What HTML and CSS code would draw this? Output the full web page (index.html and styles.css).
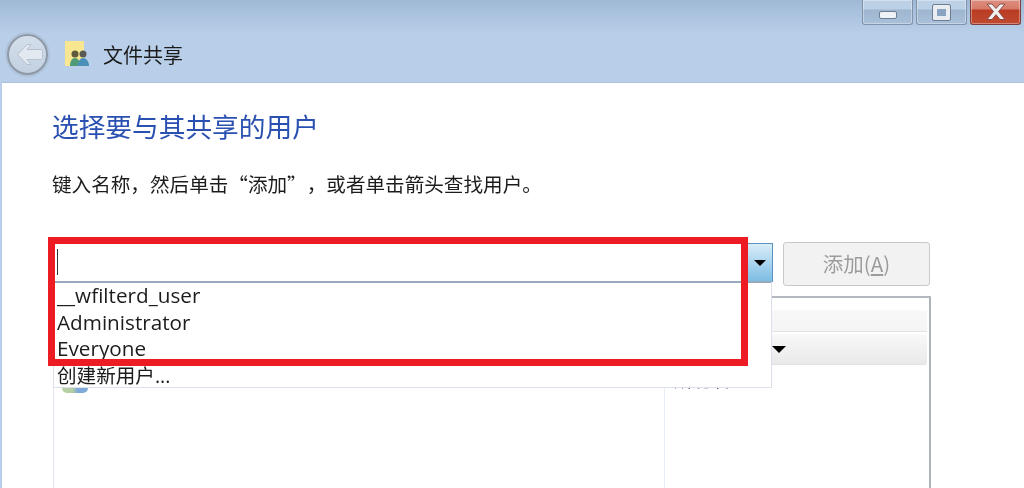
FILE: index.html
```html
<!DOCTYPE html>
<html lang="zh-CN">
<head>
    <meta charset="UTF-8">
    <title>文件共享</title>
    <link rel="stylesheet" href="styles.css">
</head>
<body>
    <div class="window">
        <div class="caption">
            <div class="caption-btn">
                <span class="min-glyph"></span>
            </div>
            <div class="caption-btn">
                <span class="max-glyph"></span>
            </div>
            <div class="caption-btn close-btn">
                <svg width="26" height="20" viewBox="0 0 26 20">
                    <path d="M4 2h5l4 4.500l4-4.500h5l-6.500 7.500l6.500 8h-5l-4-4.800l-4 4.800h-5l6.500-8z" fill="#f1eeee" stroke="#8a4a48" stroke-width="1"/>
                </svg>
            </div>
        </div>

        <div class="nav">
            <div class="back-btn">
                <svg width="30" height="30" viewBox="0 0 30 30">
                    <path d="M4.500 15.500l9.500-10h4l-4 5h14c1 0 1.500 .5 1.500 1.500v7c0 1-.5 1.500-1.500 1.500h-14l4 5h-4z" fill="#e3e9f1" stroke="#b7c1cf" stroke-width="1"/>
                </svg>
            </div>
            <svg class="share-icon" width="27" height="26" viewBox="0 0 27 26">
                <rect x="1" y="0" width="19" height="25" fill="#f8e690"/>
                <circle cx="11" cy="13" r="3.500" fill="#5e5a3a"/>
                <path d="M6 25c0-5 2-8 5-8s5 3 5 8z" fill="#4f9a78"/>
                <circle cx="19" cy="13" r="3.500" fill="#5a5a54"/>
                <path d="M14 25c0-5 2-8 5-8s6 3 6 8z" fill="#4a8fb8"/>
            </svg>
            <span class="nav-title">文件共享</span>
        </div>

        <div class="content">
            <h1 class="heading">选择要与其共享的用户</h1>
            <p class="hint">键入名称，然后单击“添加”，或者单击箭头查找用户。</p>

            <div class="input-row">
                <div class="combo">
                    <div class="combo-field"><span class="caret"></span></div>
                    <div class="combo-arrow"><span class="arrow-down"></span></div>
                </div>
                <div class="add-btn">添加(<u>A</u>)</div>
            </div>

            <div class="user-list">
                <div class="list-top"></div>
                <div class="list-head"><span class="head-arrow"></span></div>
                <div class="list-body">
                    <div class="col-name"></div>
                    <div class="col-level">所有者</div>
                </div>
            </div>
        </div>

        <div class="dropdown">
            <div class="drop-item">__wfilterd_user</div>
            <div class="drop-item">Administrator</div>
            <div class="drop-item">Everyone</div>
            <div class="drop-item drop-new">创建新用户...</div>
        </div>
        <div class="user-icon-peek"></div>
        <div class="highlight"></div>
    </div>
</body>
</html>
```

FILE: styles.css
```css
* {
    box-sizing: border-box;
}

html, body {
    margin: 0;
    height: 100%;
    overflow: hidden;
}

body {
    font-family: "Noto Sans CJK SC", sans-serif;
    background: #fff;
}

.window {
    position: relative;
    width: 1024px;
    height: 488px;
    overflow: hidden;
    background: linear-gradient(#9fb9d5 0, #b9cfe9 34px, #b9cfe9 100%);
    filter: blur(0.4px);
}

.caption {
    display: flex;
    justify-content: flex-end;
    gap: 3px;
    height: 25px;
    padding-right: 3px;
}

.caption-btn {
    width: 51px;
    height: 25px;
    display: flex;
    align-items: center;
    justify-content: center;
    border: 1px solid #7f93aa;
    border-top: 0;
    border-radius: 0 0 3px 3px;
    background: linear-gradient(#bcd0e6 0, #bcd0e6 9px, #9db6d0 10px, #a9c0da 100%);
    box-shadow: inset 0 0 0 1px rgba(255, 255, 255, 0.35);
}

.close-btn {
    border-color: #7d3c3c;
    background: linear-gradient(#dd8f80 0, #d67a6a 9px, #b93c22 10px, #c04a30 100%);
}

.min-glyph {
    width: 18px;
    height: 8px;
    margin-top: 5px;
    background: #eef1f5;
    border: 1px solid #6f7d90;
    border-radius: 2px;
}

.max-glyph {
    width: 17px;
    height: 15px;
    border: 4px solid #e9edf2;
    outline: 1px solid #6f7d90;
    background: #8aa3c2;
    border-radius: 1px;
}

.nav {
    display: flex;
    align-items: center;
    height: 58px;
    padding-left: 7px;
}

.back-btn {
    width: 41px;
    height: 41px;
    display: flex;
    align-items: center;
    justify-content: center;
    border-radius: 50%;
    border: 2px solid #8e98a6;
    background: linear-gradient(#d4dfeb, #c2d0e0);
    box-shadow: 0 0 0 2px #aec3da;
}

.share-icon {
    margin-left: 16px;
}

.nav-title {
    margin-left: 12px;
    font-size: 20px;
    color: #1c1c1c;
}

.content {
    height: 405px;
    margin-left: 2px;
    padding: 27px 0 0 50px;
    background: #fff;
    box-shadow: 0 -1px 0 #a9c1dc;
}

.heading {
    margin: 0;
    font-size: 26.700px;
    line-height: 32px;
    font-weight: 400;
    color: #2a50b2;
}

.hint {
    margin: 28px 0 0;
    font-size: 19.600px;
    line-height: 28px;
    color: #1c1c1c;
    text-spacing-trim: space-all;
}

.input-row {
    display: flex;
    margin: 45px 0 0 1px;
    height: 53px;
}

.combo {
    display: flex;
    width: 720px;
    height: 39px;
    margin-right: 10px;
    border: 1px solid #5b93c0;
}

.combo-field {
    flex: 1;
    padding: 5px 0 0 3px;
    background: #fff;
}

.caret {
    display: block;
    width: 1px;
    height: 26px;
    background: #333;
}

.combo-arrow {
    width: 25px;
    display: flex;
    align-items: center;
    justify-content: center;
    background: linear-gradient(#d9edf8, #7dbde4);
    border-left: 1px solid #5b93c0;
}

.arrow-down, .head-arrow {
    width: 0;
    height: 0;
    border-left: 6px solid transparent;
    border-right: 6px solid transparent;
    border-top: 6px solid #000;
}

.add-btn {
    width: 147px;
    height: 44px;
    margin-top: -1px;
    padding-bottom: 2px;
    display: flex;
    align-items: center;
    justify-content: center;
    background: #f2f2f2;
    border: 1px solid #c9c9c9;
    border-radius: 3px;
    font-size: 20.500px;
    color: #9c9c9c;
}

.user-list {
    width: 878px;
    height: 200px;
    margin-left: 1px;
    padding-right: 2px;
    border: 1px solid #dfe5ee;
    border-top: 2px solid #b4b8c0;
    border-right: 2px solid #aeb2ba;
}

.list-top {
    height: 34px;
    background: linear-gradient(#fff 0, #fff 12px, #f7f7f7 13px, #f5f5f5 100%);
    border-bottom: 1px solid #e2e2e2;
}

.list-head {
    display: flex;
    align-items: center;
    height: 31px;
    margin-top: 2px;
    padding-left: 718px;
    background: linear-gradient(#f8f8f8, #e9e9e9);
    border-bottom: 1px solid #e2e2e2;
    border-radius: 3px;
}

.head-arrow {
    border-left-width: 7px;
    border-right-width: 7px;
    border-top-width: 7px;
}

.list-body {
    display: flex;
    height: 130px;
}

.col-name {
    width: 611px;
    border-right: 1px solid #e8eef6;
}

.col-level {
    padding: 2px 0 0 9px;
    font-size: 19px;
    line-height: 24px;
    color: #333;
}

/* popup and the annotation box sit over the page */
.dropdown {
    position: absolute;
    left: 53px;
    top: 281px;
    width: 719px;
    height: 107px;
    padding: 0 0 0 3px;
    background: #fff;
    border: 1px solid #dde2ea;
    border-top: 2px solid #96a9bd;
    font-family: "Open Sans", "Noto Sans CJK SC", sans-serif;
    font-size: 20.700px;
    color: #1c1c1c;
}

.drop-item {
    height: 26.500px;
    line-height: 25px;
    white-space: nowrap;
}

.drop-new {
    font-size: 19.600px;
    line-height: 26.500px;
}

.user-icon-peek {
    position: absolute;
    left: 62px;
    top: 388px;
    width: 26px;
    height: 5px;
    border-radius: 0 0 10px 10px;
    background: linear-gradient(90deg, #b5cfa2 0, #b5cfa2 40%, #7fa9d8 60%);
}

.highlight {
    position: absolute;
    left: 48px;
    top: 237px;
    width: 700px;
    height: 129px;
    border: 7px solid #ed1c24;
}
```
